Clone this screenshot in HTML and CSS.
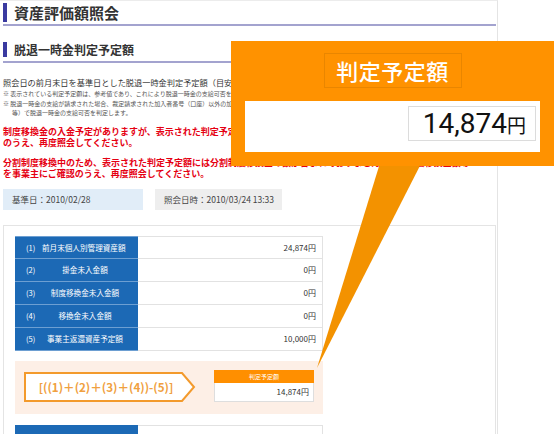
FILE: index.html
```html
<!DOCTYPE html>
<html lang="ja">
<head>
<meta charset="utf-8">
<link rel="stylesheet" href="styles.css">
</head>
<body>
<div class="sheet">
  <h1 class="title"><span class="bar">資産評価額照会</span></h1>
  <h2 class="subtitle"><span class="bar">脱退一時金判定予定額</span></h2>
  <p class="lead">照会日の前月末日を基準日とした脱退一時金判定予定額（目安）は以下のとおりです。</p>
  <ul class="notes">
    <li>※ 表示されている判定予定額は、参考値であり、これにより脱退一時金の支給可否を判定するものではありません。</li>
    <li>※ 脱退一時金の支給が請求された場合、裁定請求された加入者番号（口座）以外の加入者番号（口座）の資産額等も含めて、通算拠出期間<br>等）で脱退一時金の支給可否を判定します。</li>
  </ul>
  <p class="alert">制度移換金の入金予定がありますが、表示された判定予定額には制度移換金の額が含まれておりませんので、入金を確認<br>のうえ、再度照会してください。</p>
  <p class="alert">分割制度移換中のため、表示された判定予定額には分割制度移換金の額が含まれておりませんので、制度移換金額等<br>を事業主にご確認のうえ、再度照会してください。</p>
  <div class="dates">
    <div class="date date-base">基準日：2010/02/28</div>
    <div class="date date-query">照会日時：2010/03/24 13:33</div>
  </div>
  <div class="panel">
    <div class="table">
      <div class="row"><div class="lbl"><span class="num">(1)</span><span class="txt first">前月末個人別管理資産額</span></div><div class="val">24,874円</div></div>
      <div class="row"><div class="lbl"><span class="num">(2)</span><span class="txt">掛金未入金額</span></div><div class="val">0円</div></div>
      <div class="row"><div class="lbl"><span class="num">(3)</span><span class="txt">制度移換金未入金額</span></div><div class="val">0円</div></div>
      <div class="row"><div class="lbl"><span class="num">(4)</span><span class="txt">移換金未入金額</span></div><div class="val">0円</div></div>
      <div class="row"><div class="lbl"><span class="num">(5)</span><span class="txt">事業主返還資産予定額</span></div><div class="val">10,000円</div></div>
    </div>
    <div class="formula">
      <svg class="pent" width="172" height="30" viewBox="0 0 172 30">
        <polygon points="1,1 158,1 170,15 158,29 1,29" fill="#fff" stroke="#f39a2c" stroke-width="2"/>
        <text x="82" y="20" text-anchor="middle" class="ftext">[((1)＋(2)＋(3)＋(4))-(5)]</text>
      </svg>
      <div class="result">
        <div class="result-head">判定予定額</div>
        <div class="result-val">14,874円</div>
      </div>
    </div>
    <div class="table table-next">
      <div class="row"><div class="lbl"></div><div class="val"></div></div>
    </div>
  </div>
</div>

<svg class="tail" width="554" height="434" viewBox="0 0 554 434">
  <polygon points="384,150 428,150 317,368" fill="#f39200"/>
</svg>

<div class="callout">
  <div class="callout-label">判定予定額</div>
  <div class="callout-body">
    <div class="callout-val"><span class="amt">14,874</span><span class="yen">円</span></div>
  </div>
</div>
</body>
</html>
```

FILE: styles.css
```css
html, body {
  margin: 0;
  padding: 0;
  background: #fff;
}
body {
  width: 554px;
  height: 434px;
  overflow: hidden;
  position: relative;
  font-family: "Noto Sans CJK JP", "Noto Sans", sans-serif;
  color: #333;
}
.sheet {
  width: 498px;
  height: 434px;
  box-sizing: border-box;
  border-top: 1px solid #ececec;
  border-right: 1px solid #e4e4e4;
  padding-left: 3px;
  padding-right: 1px;
  overflow: hidden;
}
.title {
  margin: 0;
  padding: 2px 0 2px 0;
  border-bottom: 2px solid #a3a3cf;
  font-size: 15px;
  font-weight: bold;
  line-height: 19px;
  color: #333;
}
.bar {
  display: block;
  border-left: 4px solid #3a3aa0;
  padding-left: 7px;
}
.subtitle {
  margin: 16px 0 0 0;
  padding-bottom: 4px;
  border-bottom: 2px solid #a3a3cf;
  font-size: 12px;
  font-weight: bold;
  line-height: 15px;
  color: #333;
}
.lead {
  margin: 14px 0 0 0;
  font-size: 8.2px;
  line-height: 11px;
  white-space: nowrap;
  color: #333;
}
.notes {
  list-style: none;
  margin: 1px 0 0 0;
  padding: 0;
  font-size: 6px;
  line-height: 9.5px;
  color: #555;
  white-space: nowrap;
}
.notes li {
  padding-left: 9px;
  text-indent: -9px;
}
.alert {
  margin: 8px 0 0 0;
  font-size: 9px;
  line-height: 11px;
  font-weight: bold;
  color: #e50012;
  white-space: nowrap;
}
.alert + .alert {
  margin-top: 9px;
}
.dates {
  display: flex;
  gap: 12px;
  margin-top: 10px;
}
.date {
  height: 21px;
  line-height: 21px;
  font-size: 8.5px;
  padding-left: 9px;
  box-sizing: border-box;
  color: #444;
}
.date-base {
  width: 140px;
  background: #e1edf8;
}
.date-query {
  width: 127px;
  background: #eeeeee;
}
.panel {
  margin-top: 15px;
  border: 1px solid #e4e4e4;
  padding: 10px 0 0 11px;
  height: 230px;
}
.table {
  width: 308px;
}
.row {
  display: grid;
  grid-template-columns: 123px 185px;
  height: 23px;
}
.lbl {
  background: #1c69b5;
  color: #fff;
  font-size: 7.6px;
  display: flex;
  align-items: center;
  padding-left: 11px;
  border-bottom: 1px solid #6d9fd2;
  box-sizing: border-box;
}
.row:first-child .lbl {
  border-top: 1px solid #6d9fd2;
}
.num {
  width: 14px;
  flex: none;
}
.txt {
  flex: 1;
  text-align: center;
  padding-right: 8px;
}
.txt.first {
  text-align: left;
  padding-left: 2px;
  padding-right: 0;
}
.val {
  border: 1px solid #e2e2e2;
  border-top: none;
  border-left: none;
  box-sizing: border-box;
  font-size: 8px;
  display: flex;
  align-items: center;
  justify-content: flex-end;
  padding-right: 6px;
  color: #333;
}
.row:first-child .val {
  border-top: 1px solid #e2e2e2;
}
.formula {
  margin-top: 10px;
  width: 308px;
  height: 53px;
  background: #fdefe6;
  display: flex;
  align-items: center;
  padding-left: 9px;
  box-sizing: border-box;
  gap: 18px;
}
.pent {
  display: block;
  flex: none;
}
.ftext {
  font-family: "Noto Sans CJK JP", sans-serif;
  font-size: 11.6px;
  font-weight: bold;
  fill: #f0a040;
}
.result {
  width: 100px;
  margin-top: -2px;
}
.result-head {
  background: #ff8f00;
  color: #fff;
  height: 13px;
  line-height: 13px;
  font-size: 6px;
  text-align: center;
}
.result-val {
  background: #fff;
  border: 1px solid #dedede;
  border-top: none;
  height: 18px;
  line-height: 18px;
  font-size: 8px;
  text-align: right;
  padding-right: 4px;
  color: #333;
}
.table-next {
  margin-top: 11px;
}
.table-next .row:first-child .lbl {
  border-top: none;
}
.tail {
  position: absolute;
  left: 0;
  top: 0;
}
.callout {
  position: absolute;
  left: 231px;
  top: 41px;
  width: 323px;
  height: 125px;
  background: #ff9200;
  box-sizing: border-box;
  padding: 12px 14px 0 14px;
  display: flex;
  flex-direction: column;
  align-items: center;
}
.callout-label {
  width: 138px;
  height: 35px;
  box-sizing: border-box;
  border: 1px solid #e98600;
  color: #fff;
  font-size: 22px;
  font-weight: 500;
  line-height: 33px;
  text-align: center;
  letter-spacing: 0.5px;
}
.callout-body {
  margin-top: 13px;
  width: 295px;
  height: 51px;
  background: #fff;
  display: flex;
  justify-content: flex-end;
  align-items: flex-start;
  padding: 5px 4px 0 0;
  box-sizing: border-box;
}
.callout-val {
  width: 128px;
  height: 35px;
  box-sizing: border-box;
  border: 1px solid #dcdcdc;
  display: flex;
  justify-content: flex-end;
  align-items: baseline;
  padding-right: 9px;
  line-height: 33px;
  color: #111;
}
.amt {
  font-family: Roboto, "Noto Sans", sans-serif;
  font-size: 28px;
  line-height: 33px;
}
.yen {
  font-family: "Noto Sans CJK JP", sans-serif;
  font-size: 19px;
  line-height: 33px;
}
```
